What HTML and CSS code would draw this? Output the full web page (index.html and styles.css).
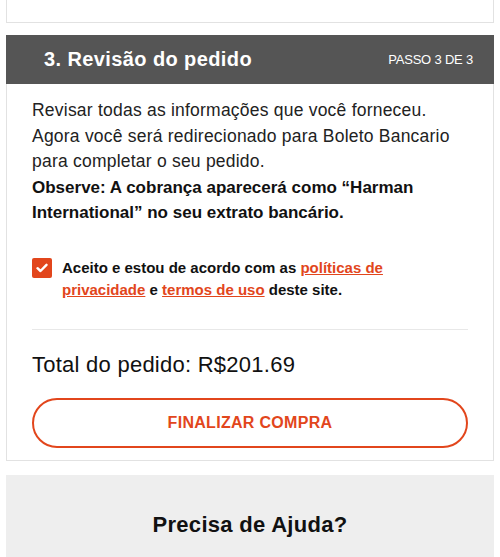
FILE: index.html
```html
<!DOCTYPE html>
<html lang="pt-BR">
<head>
    <meta charset="UTF-8">
    <meta name="viewport" content="width=device-width, initial-scale=1.0">
    <title>Revisão do pedido</title>
    <link rel="stylesheet" href="styles.css">
</head>
<body>

<div class="page">
    <div class="prev-card"></div>

    <div class="step">
        <div class="step-header">
            <h2>3. Revisão do pedido</h2>
            <span class="step-count">PASSO 3 DE 3</span>
        </div>

        <div class="step-body">
            <p class="intro">
                Revisar todas as informações que você forneceu.<br>
                Agora você será redirecionado para Boleto Bancario<br>
                para completar o seu pedido.
                <strong>Observe: A cobrança aparecerá como “Harman International” no seu extrato bancário.</strong>
            </p>

            <label class="terms">
                <span class="checkbox">
                    <svg width="12" height="10" viewBox="0 0 12 10">
                        <path d="M1.5 5.2 L4.5 8 L10.5 1.8" fill="none" stroke="#fff" stroke-width="2.4" stroke-linecap="round" stroke-linejoin="round"/>
                    </svg>
                </span>
                <span class="terms-text">Aceito e estou de acordo com as <a href="#">políticas de privacidade</a> e <a href="#">termos de uso</a> deste site.</span>
            </label>

            <div class="total">Total do pedido: R$201.69</div>

            <button class="submit">FINALIZAR COMPRA</button>
        </div>
    </div>

    <div class="help">
        <h3>Precisa de Ajuda?</h3>
    </div>
</div>

</body>
</html>
```

FILE: styles.css
```css
body {
    font-family: "Liberation Sans", Arial, sans-serif;
    margin: 0;
    color: #111;
    background: #fff;
}
.page {
    padding: 0 6px;
}
.prev-card {
    height: 22px;
    border: 1px solid #e2e2e2;
    border-top: none;
    margin-bottom: 12px;
}
.step-header {
    height: 49px;
    background-color: #555;
    color: #fff;
    display: flex;
    align-items: center;
    justify-content: space-between;
    padding: 0 21px 0 38px;
}
.step-header h2 {
    margin: 0;
    font-size: 20px;
    font-weight: bold;
    letter-spacing: 0.4px;
}
.step-count {
    font-size: 13px;
    letter-spacing: -0.2px;
}
.step-body {
    border: 1px solid #e2e2e2;
    border-top: none;
    padding: 14px 25px 12px 25px;
}
.intro {
    margin: 0;
    font-size: 17.5px;
    line-height: 25.5px;
    letter-spacing: 0.22px;
    color: #222;
}
.intro strong {
    display: block;
    font-size: 17px;
    color: #111;
    letter-spacing: 0;
}
.terms {
    display: flex;
    align-items: flex-start;
    gap: 10px;
    margin-top: 31px;
    padding-bottom: 28px;
    border-bottom: 1px solid #e8e8e8;
}
.checkbox {
    flex: none;
    width: 20px;
    height: 20px;
    border-radius: 2px;
    background-color: #e2461c;
    display: flex;
    align-items: center;
    justify-content: center;
    margin-top: 1px;
}
.terms-text {
    font-size: 15px;
    line-height: 22px;
    font-weight: bold;
    color: #111;
    max-width: 340px;
}
.terms-text a {
    color: #e2461c;
    text-decoration: underline;
}
.total {
    font-size: 22px;
    margin-top: 22px;
    line-height: 26px;
    letter-spacing: 0.25px;
    color: #111;
}
.submit {
    display: block;
    width: 100%;
    height: 50px;
    margin-top: 20px;
    border: 2px solid #e2461c;
    border-radius: 25px;
    background: #fff;
    color: #e2461c;
    font-family: inherit;
    font-size: 16px;
    font-weight: bold;
    letter-spacing: 0.3px;
    cursor: pointer;
}
.help {
    margin-top: 14px;
    background-color: #eee;
    height: 90px;
    display: flex;
    justify-content: center;
    padding-top: 37px;
    box-sizing: border-box;
}
.help h3 {
    margin: 0;
    font-size: 22px;
    font-weight: bold;
    letter-spacing: 0.3px;
    color: #111;
}
```
